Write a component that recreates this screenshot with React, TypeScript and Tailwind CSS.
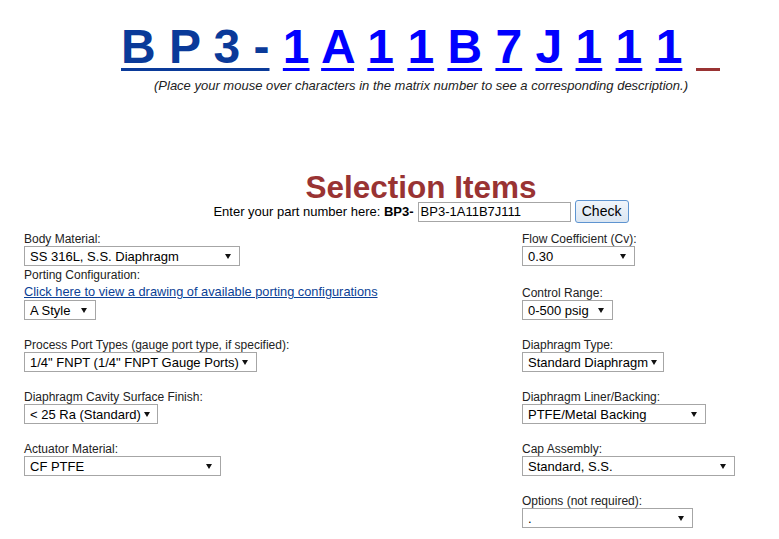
import React from "react";

function Sel({ w, value }: { w: string; value: string }) {
  return (
    <div
      className={`${w} h-[20px] border border-[#a6a6a6] bg-white flex items-center justify-between pl-[5px] pr-[8px] text-[13px] leading-[15px] text-black whitespace-nowrap`}
    >
      <span>{value}</span>
      <svg width="6" height="5" viewBox="0 0 6 5" className="shrink-0 ml-[3px]">
        <path d="M0 0 L6 0 L3 5 Z" fill="#111" />
      </svg>
    </div>
  );
}

function Label({ children, cls = "" }: { children: React.ReactNode; cls?: string }) {
  return <div className={`text-[12px] leading-[14px] text-[#222] ${cls}`}>{children}</div>;
}

export default function App() {
  const chars = ["1", "A", "1", "1", "B", "7", "J", "1", "1", "1"];
  return (
    <div className="w-[779px] min-h-[539px] bg-white text-black font-['Liberation_Sans',Arial,sans-serif]">
      <div className="pt-[19px] pl-[121px] text-[48px] font-bold leading-[55px] whitespace-pre">
        <a className="text-[#0a3a99] underline decoration-[3px] underline-offset-[5px]">B P 3 -</a>
        {chars.map((c, i) => (
          <React.Fragment key={i}>
            {" "}
            <a className="text-[#0000ff] underline decoration-[3px] underline-offset-[5px]">{c}</a>
          </React.Fragment>
        ))}
        {" "}
        <span className="inline-block w-[24px] h-[3px] bg-[#993333] mb-[-8px]"></span>
      </div>
      <div className="ml-[100px] w-[642px] text-center">
        <div className="mt-[4px] text-[13px] leading-[15px] italic text-[#222]">
          (Place your mouse over characters in the matrix number to see a corresponding description.)
        </div>
        <div className="mt-[79px] text-[31.5px] leading-[30px] font-bold text-[#993333]">Selection Items</div>
        <div className="mt-[-2px] flex items-center justify-center h-[23px] text-[13px] text-black">
          <span>Enter your part number here:&nbsp;</span>
          <b>BP3-</b>
          <div className="ml-[4px] w-[153px] h-[20px] border border-[#a6a6a6] bg-white flex items-center pl-[2px] text-[13px] text-left">
            BP3-1A11B7J111
          </div>
          <button className="ml-[4px] w-[54px] h-[23px] rounded-[3px] border border-[#5e94d0] bg-gradient-to-b from-[#f0f5fb] to-[#dbe6f2] text-[14px] text-black">
            Check
          </button>
        </div>
      </div>
      <div className="mt-[9px] pl-[24px] flex">
        <div className="w-[498px] flex flex-col items-start">
          <Label>Body Material:</Label>
          <Sel w="w-[216px]" value="SS 316L, S.S. Diaphragm" />
          <Label cls="mt-[2px]">Porting Configuration:</Label>
          <a className="mt-[3px] text-[12.8px] leading-[14px] text-[#0b3f96] underline">
            Click here to view a drawing of available porting configurations
          </a>
          <div className="mt-[1px]">
            <Sel w="w-[72px]" value="A Style" />
          </div>
          <Label cls="mt-[18px]">Process Port Types (gauge port type, if specified):</Label>
          <Sel w="w-[233px]" value={'1/4" FNPT (1/4" FNPT Gauge Ports)'} />
          <Label cls="mt-[18px]">Diaphragm Cavity Surface Finish:</Label>
          <Sel w="w-[134px]" value="< 25 Ra (Standard)" />
          <Label cls="mt-[18px]">Actuator Material:</Label>
          <Sel w="w-[197px]" value="CF PTFE" />
        </div>
        <div className="flex flex-col items-start">
          <Label>Flow Coefficient (Cv):</Label>
          <Sel w="w-[113px]" value="0.30" />
          <Label cls="mt-[20px]">Control Range:</Label>
          <Sel w="w-[91px]" value="0-500 psig" />
          <Label cls="mt-[18px]">Diaphragm Type:</Label>
          <Sel w="w-[142px]" value="Standard Diaphragm" />
          <Label cls="mt-[18px]">Diaphragm Liner/Backing:</Label>
          <Sel w="w-[184px]" value="PTFE/Metal Backing" />
          <Label cls="mt-[18px]">Cap Assembly:</Label>
          <Sel w="w-[213px]" value="Standard, S.S." />
          <Label cls="mt-[18px]">Options (not required):</Label>
          <Sel w="w-[171px]" value="." />
        </div>
      </div>
    </div>
  );
}
